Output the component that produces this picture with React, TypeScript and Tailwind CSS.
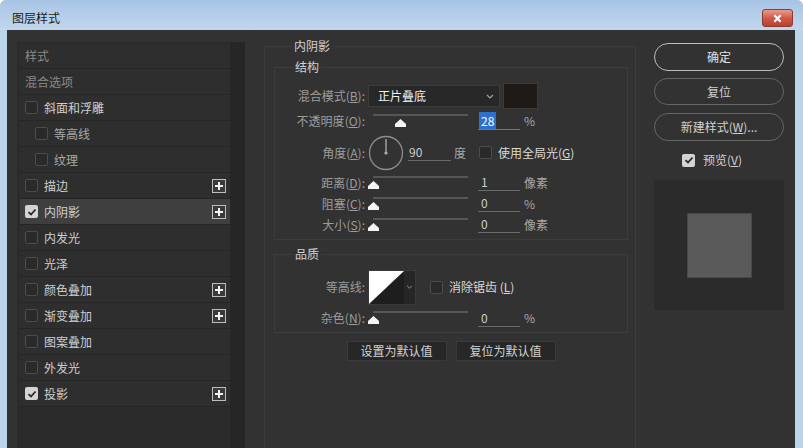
import React from 'react'

const font = "font-['Noto_Sans_CJK_SC','Liberation_Sans',sans-serif]"

function Check({ checked }: { checked?: boolean }) {
    if (checked) {
        return (
            <span className="flex h-[13px] w-[13px] shrink-0 items-center justify-center rounded-[2px] bg-[#d4d4d4]">
                <svg viewBox="0 0 12 12" className="h-[10px] w-[10px]">
                    <path d="M1.8 6.2 L4.8 9 L10.2 3" fill="none" stroke="#2a2a2a" strokeWidth="2.2" />
                </svg>
            </span>
        )
    }
    return <span className="block h-[13px] w-[13px] shrink-0 rounded-[2px] border border-[#4c4c4c] bg-[#2a2a2a]" />
}

function Plus() {
    return (
        <span className="flex h-[14px] w-[14px] items-center justify-center border border-[#bdbdbd] bg-[#3a3a3a]">
            <svg viewBox="0 0 10 10" className="h-[10px] w-[10px]">
                <path d="M5 1v8M1 5h8" stroke="#f2f2f2" strokeWidth="2" />
            </svg>
        </span>
    )
}

function Slider({ pos }: { pos: number }) {
    return (
        <div className="relative h-[20px] w-[100px]">
            <div className="absolute left-[5px] top-[3px] h-[2px] w-[95px] bg-[#565656]" />
            <svg viewBox="0 0 11 8" className="absolute top-[8px] h-[8px] w-[11px]" style={{ left: pos }}>
                <path d="M5.5 0 L11 5 L11 8 L0 8 L0 5 Z" fill="#f4f4f4" />
            </svg>
        </div>
    )
}

function Field({ value, active }: { value: string; active?: boolean }) {
    if (active) {
        return (
            <div className="ml-[10px] w-[42px] border-b border-[#3a7fd8] pl-[1px] leading-[16px]">
                <span className="bg-[#2f6fcf] px-[2px] text-white">{value}</span>
            </div>
        )
    }
    return <div className="ml-[10px] w-[42px] border-b border-[#6a6a6a] pl-[3px] leading-[16px] text-[#cfcfcf]">{value}</div>
}

function Label({ text, k }: { text: string; k: string }) {
    return (
        <div className="w-[90px] shrink-0 text-right text-[#9c9c9c]">
            {text}(<span className="underline">{k}</span>):
        </div>
    )
}

function SliderRow({ text, k, pos, value, unit, active, h }: { text: string; k: string; pos: number; value: string; unit: string; active?: boolean; h: string }) {
    return (
        <div className={`flex items-center ${h}`}>
            <Label text={text} k={k} />
            <div className="ml-[3px]">
                <Slider pos={pos} />
            </div>
            <Field value={value} active={active} />
            <span className="ml-[4px] text-[#a8a8a8]">{unit}</span>
        </div>
    )
}

const items = [
    { name: '样式', plain: true },
    { name: '混合选项', plain: true },
    { name: '斜面和浮雕' },
    { name: '等高线', sub: true },
    { name: '纹理', sub: true },
    { name: '描边', plus: true },
    { name: '内阴影', checked: true, plus: true, selected: true },
    { name: '内发光' },
    { name: '光泽' },
    { name: '颜色叠加', plus: true },
    { name: '渐变叠加', plus: true },
    { name: '图案叠加' },
    { name: '外发光' },
    { name: '投影', checked: true, plus: true },
]

export default function App() {
    return (
        <div className={`h-[448px] w-[803px] overflow-hidden rounded-t-[6px] bg-[#bcd3ec] text-[12px] ${font}`}>
            <div className="flex h-[30px] items-center justify-between bg-gradient-to-b from-[#a8c4e4] to-[#c2d7ee] pl-[12px] pr-[10px] pt-[6px]">
                <span className="text-[12px] text-[#1b1b1b]">图层样式</span>
                <span className="flex h-[18px] w-[31px] items-center justify-center rounded-[3px] border border-[#8c3b2f] bg-gradient-to-b from-[#e89c8c] via-[#d0594a] to-[#b8402f]">
                    <svg viewBox="0 0 10 10" className="h-[9px] w-[9px]">
                        <path d="M1.5 1.5 L8.5 8.5 M8.5 1.5 L1.5 8.5" stroke="#ffffff" strokeWidth="2.4" />
                    </svg>
                </span>
            </div>

            <div className="ml-[7px] mr-[8px] flex h-[418px] bg-[#323232]">
                {/* left list */}
                <div className="ml-[10px] mt-[12px] flex w-[228px] bg-[#2b2b2b]">
                    <div className="w-[213px] pl-[3px] pt-[2px]">
                        {items.map((it, i) => (
                            <div
                                key={it.name}
                                className={`flex items-center border-b border-[#262626] pr-[4px] ${i === 0 ? 'h-[25px]' : 'h-[26px]'} ${it.selected ? 'bg-[#3f3f3f]' : 'bg-[#2e2e2e]'} ${it.sub ? 'pl-[15px]' : 'pl-[5px]'}`}
                            >
                                {it.plain ? (
                                    <span className="text-[#8a8a8a]">{it.name}</span>
                                ) : (
                                    <>
                                        <Check checked={it.checked} />
                                        <span className={`ml-[6px] ${it.sub ? 'text-[#a8a8a8]' : 'text-[#cfcfcf]'}`}>{it.name}</span>
                                    </>
                                )}
                                {it.plus && (
                                    <span className="ml-auto">
                                        <Plus />
                                    </span>
                                )}
                            </div>
                        ))}
                    </div>
                    <div className="w-[15px] bg-[#262626]" />
                </div>

                {/* middle */}
                <fieldset className="ml-[19px] mt-[8px] h-[440px] w-[372px] border border-[#3c3c3c] pl-[9px] pr-[7px]">
                    <legend className="ml-[18px] px-[2px] leading-[16px] text-[#d2d2d2]">内阴影</legend>

                    <fieldset className="mt-[5px] border border-[#3c3c3c] pb-[4px] pt-[8px]">
                        <legend className="ml-[18px] px-[2px] leading-[16px] text-[#d2d2d2]">结构</legend>
                        <div className="flex h-[26px] items-center">
                            <Label text="混合模式" k="B" />
                            <div className="ml-[3px] flex h-[22px] w-[132px] items-center justify-between border border-[#3c3c3c] bg-[#282828] pl-[9px] pr-[5px]">
                                <span className="text-[#f0f0f0]">正片叠底</span>
                                <svg viewBox="0 0 8 5" className="h-[5px] w-[8px]">
                                    <path d="M1 1 L4 4 L7 1" fill="none" stroke="#a0a0a0" strokeWidth="1.2" />
                                </svg>
                            </div>
                            <div className="ml-[3px] h-[26px] w-[35px] border border-[#3a3a3a] bg-[#1f1a17]" />
                        </div>
                        <SliderRow text="不透明度" k="O" pos={27} value="28" unit="%" active h="h-[24px]" />
                        <div className="flex h-[39px] items-center">
                            <div className="w-[90px] shrink-0 text-right text-[#9c9c9c]">
                                角度(<span className="underline">A</span>):
                            </div>
                            <svg viewBox="0 0 36 36" className="ml-[3px] h-[36px] w-[36px]">
                                <circle cx="18" cy="18" r="16.5" fill="none" stroke="#8e8e8e" strokeWidth="1.3" />
                                <path d="M18 18 V4" stroke="#b0b0b0" strokeWidth="1.3" />
                                <circle cx="18" cy="18" r="1.6" fill="#b0b0b0" />
                            </svg>
                            <div className="ml-[4px] w-[43px] border-b border-[#6a6a6a] pl-[1px] leading-[16px] text-[#cfcfcf]">90</div>
                            <span className="ml-[3px] text-[#a8a8a8]">度</span>
                            <span className="ml-[13px] flex">
                                <Check />
                            </span>
                            <span className="ml-[6px] text-[#dadada]">
                                使用全局光(<span className="underline">G</span>)
                            </span>
                        </div>
                        <SliderRow text="距离" k="D" pos={0} value="1" unit="像素" h="h-[21px]" />
                        <SliderRow text="阻塞" k="C" pos={0} value="0" unit="%" h="h-[21px]" />
                        <SliderRow text="大小" k="S" pos={0} value="0" unit="像素" h="h-[21px]" />
                    </fieldset>

                    <fieldset className="mt-[6px] border border-[#3c3c3c] pb-[4px] pt-[8px]">
                        <legend className="ml-[18px] px-[2px] leading-[16px] text-[#d2d2d2]">品质</legend>
                        <div className="flex h-[34px] items-center">
                            <div className="w-[90px] shrink-0 text-right text-[#9c9c9c]">等高线:</div>
                            <div className="ml-[3px] flex h-[35px] border border-[#3a3a3a]">
                                <svg viewBox="0 0 35 35" className="h-[33px] w-[35px]" preserveAspectRatio="none">
                                    <rect width="35" height="35" fill="#1e1e1e" />
                                    <path d="M0 0 H35 L0 35 Z" fill="#ffffff" />
                                </svg>
                                <div className="flex w-[11px] items-center justify-center bg-[#262626]">
                                    <svg viewBox="0 0 8 5" className="h-[4px] w-[7px]">
                                        <path d="M1 1 L4 4 L7 1" fill="none" stroke="#9a9a9a" strokeWidth="1.2" />
                                    </svg>
                                </div>
                            </div>
                            <span className="ml-[14px] flex">
                                <Check />
                            </span>
                            <span className="ml-[6px] text-[#dadada]">
                                消除锯齿 (<span className="underline">L</span>)
                            </span>
                        </div>
                        <div className="mt-[4px]">
                            <SliderRow text="杂色" k="N" pos={0} value="0" unit="%" h="h-[20px]" />
                        </div>
                    </fieldset>

                    <div className="mt-[8px] flex justify-center gap-[9px]">
                        <div className="flex h-[20px] w-[100px] items-center justify-center border border-[#3a3a3a] bg-[#272727] text-[#d2d2d2]">设置为默认值</div>
                        <div className="flex h-[20px] w-[100px] items-center justify-center border border-[#3a3a3a] bg-[#272727] text-[#d2d2d2]">复位为默认值</div>
                    </div>
                </fieldset>

                {/* right */}
                <div className="ml-[18px] mt-[13px] w-[130px]">
                    <div className="flex h-[28px] items-center justify-center rounded-full border-[1.5px] border-[#bcbcbc] text-[#e0e0e0]">确定</div>
                    <div className="mt-[7px] flex h-[27px] items-center justify-center rounded-full border-[1.5px] border-[#666666] text-[#d0d0d0]">复位</div>
                    <div className="mt-[8px] flex h-[28px] items-center justify-center rounded-full border-[1.5px] border-[#666666] text-[#d0d0d0]">
                        新建样式(<span className="underline">W</span>)...
                    </div>
                    <div className="mt-[10px] flex items-center pl-[28px]">
                        <Check checked />
                        <span className="ml-[8px] text-[#d0d0d0]">
                            预览(<span className="underline">V</span>)
                        </span>
                    </div>
                    <div className="mt-[11px] flex h-[130px] items-center justify-center bg-[#2b2b2b]">
                        <div className="h-[65px] w-[65px] border border-[#474747] bg-[#5a5a5a]" />
                    </div>
                </div>
            </div>
        </div>
    )
}
